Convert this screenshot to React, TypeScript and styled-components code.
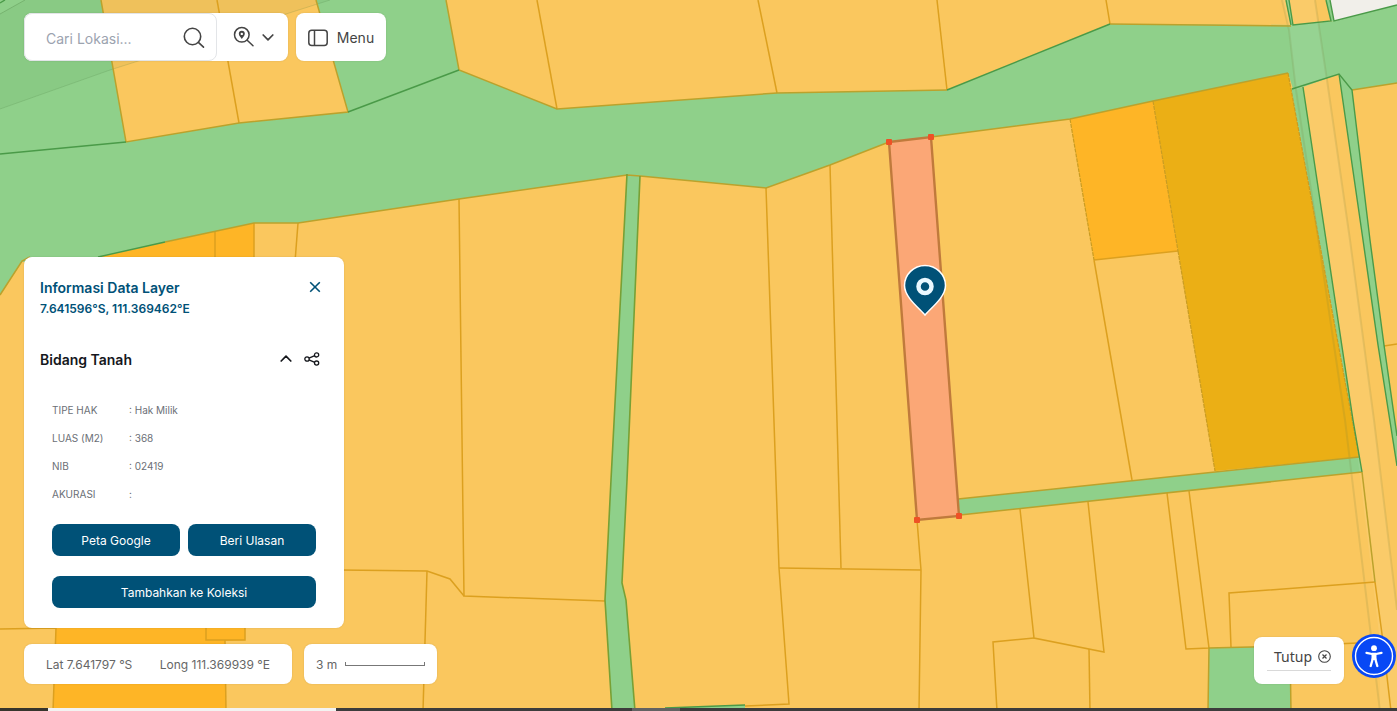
import React, { useState } from 'react';
import styled, { createGlobalStyle } from 'styled-components';

const GlobalStyle = createGlobalStyle`
  *, *::before, *::after { box-sizing: border-box; }
  body {
    margin: 0;
    font-family: Inter, "Liberation Sans", sans-serif;
    color: #444444;
  }
  button, input { font: inherit; color: inherit; }
`;

const Page = styled.main`
  position: relative;
  min-height: 100vh;
  display: flex;
  flex-direction: column;
  overflow: hidden;
  background: #fac75e;
`;

const MapCanvas = styled.svg`
  position: absolute;
  inset: 0;
  width: 100%;
  height: 100%;
`;

const Overlay = styled.div`
  position: relative;
  flex: 1;
  display: flex;
  flex-direction: column;
  justify-content: space-between;
  gap: 16px;
  padding: 13px 1px 24px 24px;
`;

const Toolbar = styled.header`
  display: flex;
  gap: 8px;
  height: 48px;
`;

const Card = styled.div`
  display: flex;
  align-items: center;
  background: #ffffff;
  border-radius: 8px;
  box-shadow: 0 0 2px rgba(0, 0, 0, 0.12);
`;

const SearchBox = styled.form`
  display: flex;
  align-items: center;
  width: 193px;
  height: 48px;
  padding: 2px 11px 0 21px;
  border: 1px solid #e3e5e8;
  border-radius: 8px;
`;

const SearchInput = styled.input`
  flex: 1;
  min-width: 0;
  padding: 0;
  border: 0;
  outline: 0;
  background: none;
  font-size: 14px;
  &::placeholder { color: #9ca3af; opacity: 1; }
`;

const IconButton = styled.button`
  display: flex;
  align-items: center;
  justify-content: center;
  gap: 6px;
  padding: 0;
  border: 0;
  background: none;
  color: ${(p) => p.color || '#444444'};
  cursor: pointer;
`;

const LocateButton = styled(IconButton)`
  width: 71px;
  height: 48px;
  gap: 7px;
  padding-left: 2px;
`;

const MenuButton = styled(IconButton)`
  width: 90px;
  gap: 9px;
  padding-top: 1px;
  border-radius: 8px;
  background: #ffffff;
  box-shadow: 0 0 2px rgba(0, 0, 0, 0.12);
  font-size: 14px;
`;

const BottomArea = styled.div`
  display: flex;
  align-items: flex-end;
  justify-content: space-between;
`;

const LeftColumn = styled.div`
  display: flex;
  flex-direction: column;
  gap: 16px;
`;

const Panel = styled.section`
  width: 320px;
  padding: 20px 16px;
  border-radius: 8px;
  background: #ffffff;
  box-shadow: 0 0 2px rgba(0, 0, 0, 0.12);
`;

const PanelHeader = styled.div`
  display: flex;
  align-items: flex-start;
  justify-content: space-between;
  padding-right: 7px;
  color: #005177;
`;

const PanelTitle = styled.h2`
  margin: 0;
  font-size: 14px;
  font-weight: 600;
  line-height: 22px;
`;

const Coordinates = styled.p`
  margin: 0;
  font-size: 12px;
  font-weight: 600;
  line-height: 20px;
`;

const CloseButton = styled.button`
  display: flex;
  align-items: center;
  height: 20px;
  padding: 0;
  border: 0;
  background: none;
  color: #005177;
  cursor: pointer;
`;

const SectionHeader = styled.div`
  display: flex;
  align-items: center;
  justify-content: space-between;
  height: 32px;
  margin-top: 24px;
  padding-right: 8px;
`;

const SectionTitle = styled.h3`
  margin: 0;
  font-size: 14px;
  font-weight: 600;
  color: #15171c;
`;

const SectionActions = styled.div`
  display: flex;
  align-items: center;
  gap: 12px;
`;

const Attributes = styled.table`
  margin: 21px 12px 16px;
  border-collapse: collapse;
  font-size: 10px;
  color: #6b6f76;
`;

const AttributeName = styled.th`
  width: 77px;
  height: 28px;
  padding: 0;
  font-weight: 400;
  text-align: left;
`;

const AttributeValue = styled.td`
  height: 28px;
  padding: 0;
`;

const Actions = styled.div`
  display: grid;
  grid-template-columns: 1fr 1fr;
  gap: 20px 8px;
  padding: 0 12px;
`;

const ActionButton = styled.button<{ $wide?: boolean }>`
  grid-column: ${(p) => (p.$wide ? '1 / -1' : 'auto')};
  height: 32px;
  padding: 1px 0 0;
  border: 0;
  border-radius: 8px;
  background: #005177;
  color: #ffffff;
  font-size: 12px;
  cursor: pointer;
`;

const StatusRow = styled.div`
  display: flex;
  gap: 12px;
  font-size: 12px;
  color: #666666;
`;

const CursorPosition = styled(Card)`
  width: 268px;
  height: 40px;
  padding: 0 22px;
  justify-content: space-between;
`;

const ScaleCard = styled(Card)`
  height: 40px;
  padding: 0 12px;
  gap: 8px;
`;

const ScaleLine = styled.span`
  width: 80px;
  height: 4px;
  border: solid #777777;
  border-width: 0 1px 1px;
`;

const Corner = styled.div`
  display: flex;
  align-items: flex-end;
  gap: 8px;
`;

const DismissCard = styled(Card)`
  width: 90px;
  height: 47px;
  padding-bottom: 8px;
  justify-content: center;
`;

const DismissButton = styled(IconButton)`
  width: 64px;
  height: 28px;
  justify-content: flex-end;
  border-bottom: 1px solid #d9d9d9;
  font-family: "Noto Sans", sans-serif;
  font-size: 14px;
`;

const AccessibilityButton = styled(IconButton)`
  width: 44px;
  height: 44px;
  margin-bottom: 6px;
`;

const WindowEdge = styled.div`
  position: relative;
  display: flex;
  height: 3px;
  background: #3c3c3c;
`;

const EdgePart = styled.span<{ $width: number; $color: string }>`
  width: ${(p) => p.$width}px;
  background: ${(p) => p.$color};
`;

const YELLOW = '#fac75e';
const ORANGE = '#feb526';
const GREEN = '#8fd08a';
const EDGE = '#dca01f';
const MIXED_EDGE = '#bba22c';
const GREEN_EDGE = '#4a9a48';

const greenAreas = [
  '0,0 101,0 126,142 239,123 348,112 316,0 446,0 459,70 557,109 777,93 947,90 1110,24 1293,25 1334,21 1397,4 1397,83 1352,90 1339,74 1303,87 1293,89 1288,73 1153,101 1070,119 931,137 889,142 830,165 766,188 640,176 627,175 459,199 298,223 254,223 98,257 22,262 0,295',
  '627,174 640,176 627,480 622,583 626,600 635,711 612,711 605,600 611,480',
  '958,499 1359,457 1362,472 960,515',
  '1291,89 1303,87 1326,240 1353,420 1359,457 1319,240',
  '1339,74 1352,90 1370,240 1384,345 1397,436 1397,466 1378,345 1363,240',
  '1209,648 1290,646 1291,711 1208,711',
  '1286,0 1289,0 1293,25 1291,25',
  '1326,0 1330,0 1334,21 1331,21',
  '660,711 665,708 745,705 745,711',
];

const orangeAreas = [
  '98,257 254,223 254,270 98,270',
  '56,620 245,620 245,640 225,641 226,711 53,711',
  '1070,119 1153,101 1178,251 1094,260',
];

const parcelEdges = [
  '217,0 239,123',
  '537,0 557,109',
  '758,0 777,93',
  '937,0 947,90',
  '1106,0 1110,24',
  '254,223 254,262',
  '215,232 215,262',
  '298,223 295,262',
  '459,199 464,596 605,601',
  '340,570 427,571 450,579 464,596',
  '427,571 423,711',
  '0,629 56,628 53,711',
  '206,620 206,640 245,640 245,620',
  '225,640 226,711',
  '766,188 779,568 789,704 745,706',
  '779,568 921,570',
  '830,165 841,568',
  '917,520 921,570 919,711',
  '1094,260 1178,251',
  '1094,260 1132,480',
  '1020,509 1034,638 1104,652 1088,502',
  '997,711 993,642 1034,638',
  '1089,649 1090,711',
  '1167,493 1186,649 1209,648 1189,491',
  '1375,582 1229,593 1231,647',
  '1290,646 1380,642',
  '1384,346 1397,344',
  '1375,582 1382,634 1391,711',
];

const mixedEdges = [
  '101,0 126,142 239,123 348,112 316,0',
  '446,0 459,70 557,109 777,93 947,90',
  '1110,24 1291,26',
  '0,295 22,261 30,257',
  '165,242 254,223 298,223 459,199 627,175 640,176 766,188 830,165 889,142',
  '931,137 1070,119 1153,101 1288,73',
  '958,499 1359,457',
  '960,515 1362,472',
  '1208,711 1209,648 1290,646 1291,711',
  '1352,90 1397,83',
  '1362,472 1375,582',
];

const dashedEdges = ['1070,119 1094,260', '1178,251 1215,471', '1153,101 1178,251', '1288,73 1319,240 1359,457'];

const greenEdges = [
  '0,154 126,142',
  '0,3 5,0',
  '348,112 459,70',
  '947,90 1110,24',
  '98,257 165,242',
  '1286,0 1291,25',
  '1289,0 1293,25 1331,21 1326,0',
  '1330,0 1334,21 1397,5',
  '1292,89 1339,74 1352,90 1370,240 1384,345 1397,436',
  '1303,87 1326,240 1353,420 1362,472',
  '1339,74 1363,240 1378,345 1397,466',
];

const channelEdges = ['627,174 611,480 605,600 612,711', '640,176 627,480 622,583 626,600 635,711'];

const selectedCorners = [
  [889, 142],
  [931, 137],
  [959, 516],
  [917, 520],
];

function ParcelMap() {
  return (
    <MapCanvas viewBox="0 0 1397 711" preserveAspectRatio="xMidYMid slice" role="img" aria-label="Peta bidang tanah">
      <rect width="1397" height="711" fill={YELLOW} />
      {greenAreas.map((p) => <polygon key={p} points={p} fill={GREEN} />)}
      <polygon points="101,0 316,0 348,112 239,123 126,142" fill={YELLOW} />
      <polygon points="1330,0 1397,0 1397,5 1334,21" fill="#f1efea" />
      {orangeAreas.map((p) => <polygon key={p} points={p} fill={ORANGE} />)}
      <polygon points="1153,101 1288,73 1359,457 1215,471 1178,251" fill="#ebaf15" />

      <polygon points="0,14 25,0 330,0 110,70 0,109" fill="#2f5a2f" opacity="0.05" />
      <polyline points="0,109 110,70 330,0" fill="none" stroke="#4a7a3c" opacity="0.18" />
      <polyline points="0,14 25,0" fill="none" stroke="#4a7a3c" opacity="0.3" />
      <polygon points="1282,0 1289,30 1296,90 1303,87 1326,240 1353,420 1380,642 1380,711 1397,711 1397,610 1374,420 1350,240 1327,80 1315,0" fill="#ffffff" opacity="0.07" />
      <g fill="none" stroke="#77803a" strokeWidth="2" opacity="0.16">
        <polyline points="1282,0 1289,30 1296,90 1320,250 1345,420 1380,711" />
        <polyline points="1315,0 1327,80 1350,240 1374,420 1397,610" />
      </g>

      <g fill="none" stroke={EDGE} strokeWidth="1.5">
        {parcelEdges.map((p) => <polyline key={p} points={p} />)}
      </g>
      <g fill="none" stroke={MIXED_EDGE} strokeWidth="1.5">
        {mixedEdges.map((p) => <polyline key={p} points={p} />)}
      </g>
      <g fill="none" stroke="#c99c22" strokeWidth="1.2" strokeDasharray="4 1">
        {dashedEdges.map((p) => <polyline key={p} points={p} />)}
      </g>
      <g fill="none" stroke={GREEN_EDGE} strokeWidth="1.4">
        {greenEdges.map((p) => <polyline key={p} points={p} />)}
      </g>
      <g fill="none" stroke="#78a035" strokeWidth="1.6">
        {channelEdges.map((p) => <polyline key={p} points={p} />)}
      </g>
      <polyline points="665,708 745,705" fill="none" stroke={GREEN_EDGE} strokeWidth="1.4" />

      <polygon points="889,142 931,137 959,516 917,520" fill="#fba776" stroke="#c07a3c" strokeWidth="2.4" />
      {selectedCorners.map(([x, y]) => (
        <rect key={x} x={x - 3} y={y - 3} width="6" height="6" rx="1" fill="#ee5126" />
      ))}

      <path
        d="M925 315 C921 309.5 904.5 298 904.5 285.5 A20.5 20 0 0 1 945.5 285.5 C945.5 298 929 309.5 925 315 Z"
        fill="#005177"
        stroke="#ffffff"
        strokeWidth="1.5"
      />
      <circle cx="925" cy="286.5" r="6.5" fill="none" stroke="#eaf8ff" strokeWidth="4.5" />
    </MapCanvas>
  );
}

const SearchIcon = () => (
  <svg width="22" height="22" viewBox="0 0 22 22" fill="none" stroke="currentColor" strokeWidth="1.6" strokeLinecap="round">
    <circle cx="9.5" cy="9.5" r="8.2" />
    <path d="M15.4 15.4 L20.5 20.2" />
  </svg>
);

const LocateIcon = () => (
  <svg width="22" height="22" viewBox="0 0 22 22" fill="none" stroke="currentColor" strokeWidth="1.5" strokeLinecap="round">
    <circle cx="8.8" cy="8.8" r="7.3" />
    <path d="M14.2 14.2 L20 19.8" />
    <path
      d="M8.8 13 C7.8 11.3 5.8 9.8 5.8 7.8 A3 3 0 0 1 11.8 7.8 C11.8 9.8 9.800 11.3 8.8 13 Z M8.8 6.7 A1.2 1.2 0 1 0 8.8 9.1 A1.2 1.2 0 1 0 8.8 6.7 Z"
      fill="currentColor"
      fillRule="evenodd"
      stroke="none"
    />
  </svg>
);

const Chevron = ({ up = false }: { up?: boolean }) => (
  <svg width="12" height="8" viewBox="0 0 12 8" fill="none" stroke="currentColor" strokeWidth="1.7" strokeLinecap="round" strokeLinejoin="round">
    <path d={up ? 'M1.200 6 L6 1.2 L10.8 6' : 'M1.2 2 L6 6.8 L10.8 2'} />
  </svg>
);

const SidebarIcon = () => (
  <svg width="20" height="18" viewBox="0 0 20 18" fill="none" stroke="currentColor" strokeWidth="1.5">
    <rect x="0.8" y="1.2" width="18.4" height="15.2" rx="3" />
    <path d="M6.5 1.2 V16.4" />
  </svg>
);

const CrossIcon = () => (
  <svg width="12" height="12" viewBox="0 0 12 12" fill="none" stroke="currentColor" strokeWidth="1.6">
    <path d="M1.2 1.2 L10.8 10.8 M10.8 1.2 L1.2 10.8" />
  </svg>
);

const ShareIcon = () => (
  <svg width="16" height="14" viewBox="0 0 16 14" fill="none" stroke="currentColor" strokeWidth="1.3">
    <circle cx="3" cy="7" r="2.2" />
    <circle cx="12.6" cy="2.9" r="2.1" />
    <circle cx="12.6" cy="11.1" r="2.1" />
    <path d="M5 6.1 L10.7 3.7 M5 7.9 L10.7 10.3" />
  </svg>
);

const CircledCross = () => (
  <svg width="13" height="13" viewBox="0 0 13 13" fill="none" stroke="currentColor" strokeWidth="1.1">
    <circle cx="6.5" cy="6.5" r="5.8" />
    <path d="M4.5 4.5 L8.5 8.5 M8.5 4.5 L4.5 8.5" strokeWidth="1.2" />
  </svg>
);

const AccessibilityIcon = () => (
  <svg width="44" height="44" viewBox="0 0 44 44">
    <circle cx="22" cy="22" r="22" fill="#0848f5" />
    <circle cx="22" cy="22" r="18.5" fill="none" stroke="#ffffff" strokeWidth="1.4" />
    <g fill="none" stroke="#ffffff" strokeLinecap="round" strokeLinejoin="round">
      <path d="M14.5 18.8 L20 20 H24 L29.5 18.8" strokeWidth="2.3" />
      <path d="M22 20.5 V26" strokeWidth="5" strokeLinecap="butt" />
      <path d="M20.7 25 L18.7 32 M23.3 25 L25.3 32" strokeWidth="2.3" />
    </g>
    <circle cx="22" cy="14.2" r="2.9" fill="#ffffff" />
  </svg>
);

const attributes = [
  ['TIPE HAK', 'Hak Milik'],
  ['LUAS (M2)', '368'],
  ['NIB', '02419'],
  ['AKURASI', ''],
];

export default function App() {
  const [query, setQuery] = useState('');

  return (
    <>
      <GlobalStyle />
      <Page>
        <ParcelMap />
        <Overlay>
          <Toolbar>
            <Card>
              <SearchBox onSubmit={(e) => e.preventDefault()}>
                <SearchInput
                  aria-label="Cari Lokasi"
                  placeholder="Cari Lokasi..."
                  value={query}
                  onChange={(e) => setQuery(e.target.value)}
                />
                <IconButton type="submit" aria-label="Cari"><SearchIcon /></IconButton>
              </SearchBox>
              <LocateButton type="button" aria-label="Jenis pencarian">
                <LocateIcon />
                <Chevron />
              </LocateButton>
            </Card>
            <MenuButton type="button">
              <SidebarIcon />
              Menu
            </MenuButton>
          </Toolbar>

          <BottomArea>
            <LeftColumn>
              <Panel>
                <PanelHeader>
                  <div>
                    <PanelTitle>Informasi Data Layer</PanelTitle>
                    <Coordinates>7.641596°S, 111.369462°E</Coordinates>
                  </div>
                  <CloseButton type="button" aria-label="Tutup panel">
                    <CrossIcon />
                  </CloseButton>
                </PanelHeader>
                <SectionHeader>
                  <SectionTitle>Bidang Tanah</SectionTitle>
                  <SectionActions>
                    <IconButton type="button" color="#15171c" aria-label="Ciutkan">
                      <Chevron up />
                    </IconButton>
                    <IconButton type="button" color="#15171c" aria-label="Bagikan">
                      <ShareIcon />
                    </IconButton>
                  </SectionActions>
                </SectionHeader>
                <Attributes>
                  <tbody>
                    {attributes.map(([name, value]) => (
                      <tr key={name}>
                        <AttributeName scope="row">{name}</AttributeName>
                        <AttributeValue>: {value}</AttributeValue>
                      </tr>
                    ))}
                  </tbody>
                </Attributes>
                <Actions>
                  <ActionButton type="button">Peta Google</ActionButton>
                  <ActionButton type="button">Beri Ulasan</ActionButton>
                  <ActionButton type="button" $wide>Tambahkan ke Koleksi</ActionButton>
                </Actions>
              </Panel>
              <StatusRow>
                <CursorPosition>
                  <span>Lat 7.641797 °S</span>
                  <span>Long 111.369939 °E</span>
                </CursorPosition>
                <ScaleCard>
                  <span>3 m</span>
                  <ScaleLine />
                </ScaleCard>
              </StatusRow>
            </LeftColumn>
            <Corner>
              <DismissCard>
                <DismissButton type="button">
                  Tutup
                  <CircledCross />
                </DismissButton>
              </DismissCard>
              <AccessibilityButton type="button" aria-label="Aksesibilitas">
                <AccessibilityIcon />
              </AccessibilityButton>
            </Corner>
          </BottomArea>
        </Overlay>
        <WindowEdge>
          <EdgePart $width={48} $color="#37352c" />
          <EdgePart $width={288} $color="#f3f3f1" />
          <EdgePart $width={296} $color="#3c3c3c" />
          <EdgePart $width={48} $color="#626262" />
        </WindowEdge>
      </Page>
    </>
  );
}
